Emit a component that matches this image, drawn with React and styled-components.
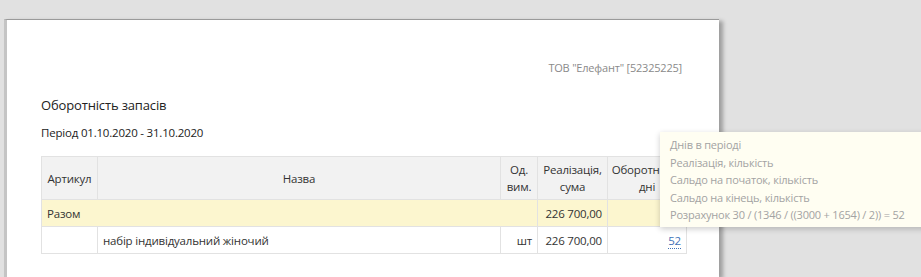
import styled, { createGlobalStyle } from "styled-components";

const GlobalStyle = createGlobalStyle`
  html, body {
    margin: 0;
    padding: 0;
    background: #e1e1e1;
  }
  body {
    font-family: "Open Sans", "Noto Sans", sans-serif;
    color: #333;
    overflow: hidden;
  }
`;

const Screen = styled.div`
  position: relative;
  width: 921px;
  height: 277px;
  padding: 19px 0 0 4px;
  box-sizing: border-box;
`;

const Page = styled.div`
  width: 715px;
  height: 258px;
  box-sizing: border-box;
  background: #fff;
  border-top: 1px solid #9a9a9a;
  border-left: 3px solid #c4c4c4;
  box-shadow: 4px 2px 4px rgba(0, 0, 0, 0.3);
  padding: 0 33px 0 34px;
`;

const Company = styled.div`
  text-align: right;
  padding: 40px 4px 0 0;
  font-size: 11px;
  color: #8a8a8a;
  letter-spacing: -0.2px;
`;

const Title = styled.h1`
  margin: 21px 0 0;
  font-size: 13px;
  font-weight: 400;
  color: #222;
  letter-spacing: -0.15px;
`;

const Period = styled.div`
  margin-top: 11px;
  font-size: 11.5px;
  color: #222;
  letter-spacing: -0.2px;
`;

const Table = styled.table`
  margin-top: 16px;
  width: 645px;
  border-collapse: collapse;
  table-layout: fixed;
  font-size: 11.5px;
  letter-spacing: -0.2px;
`;

const Th = styled.th`
  background: #f2f2f2;
  font-weight: 400;
  color: #333;
  height: 42px;
  padding: 0 2px;
  border: 1px solid #e2e2e2;
  text-align: center;
  line-height: 17px;
  white-space: nowrap;
  overflow: hidden;
`;

const Row = styled.tr`
  background: ${(p) => (p.$total ? "#fcf6cf" : "#fff")};
`;

const Td = styled.td`
  height: 26px;
  padding: 0 5px;
  border: 1px solid #e2e2e2;
  text-align: ${(p) => p.$align || "left"};
  color: #333;
  white-space: nowrap;
`;

const Link = styled.span`
  color: #3f72b8;
  border-bottom: 1px dotted #3f72b8;
`;

const Tooltip = styled.div`
  position: absolute;
  left: 660px;
  top: 132px;
  width: 290px;
  height: 95px;
  box-sizing: border-box;
  padding: 4px 10px;
  background: #fffef2;
  box-shadow: 0 2px 6px rgba(0, 0, 0, 0.2);
  font-size: 11px;
  line-height: 17.5px;
  color: #a3a3a3;
  letter-spacing: -0.2px;
`;

const TipLine = styled.div`
  white-space: nowrap;
`;

const columns = [56, 403, 37, 70, 79];

const tipLines = [
  "Днів в періоді",
  "Реалізація, кількість",
  "Сальдо на початок, кількість",
  "Сальдо на кінець, кількість",
  "Розрахунок 30 / (1346 / ((3000 + 1654) / 2)) = 52",
];

export default function App() {
  return (
    <Screen>
      <GlobalStyle />
      <Page>
        <Company>ТОВ "Елефант" [52325225]</Company>
        <Title>Оборотність запасів</Title>
        <Period>Період 01.10.2020 - 31.10.2020</Period>
        <Table>
          <colgroup>
            {columns.map((w, i) => (
              <col key={i} style={{ width: w }} />
            ))}
          </colgroup>
          <thead>
            <tr>
              <Th>Артикул</Th>
              <Th>Назва</Th>
              <Th>
                Од.
                <br />
                вим.
              </Th>
              <Th>
                Реалізація,
                <br />
                сума
              </Th>
              <Th>
                Оборотність,
                <br />
                дні
              </Th>
            </tr>
          </thead>
          <tbody>
            <Row $total>
              <Td colSpan={3}>Разом</Td>
              <Td $align="right">226 700,00</Td>
              <Td />
            </Row>
            <Row>
              <Td />
              <Td>набір індивідуальний жіночий</Td>
              <Td $align="right">шт</Td>
              <Td $align="right">226 700,00</Td>
              <Td $align="right">
                <Link>52</Link>
              </Td>
            </Row>
          </tbody>
        </Table>
      </Page>
      <Tooltip>
        {tipLines.map((t) => (
          <TipLine key={t}>{t}</TipLine>
        ))}
      </Tooltip>
    </Screen>
  );
}
